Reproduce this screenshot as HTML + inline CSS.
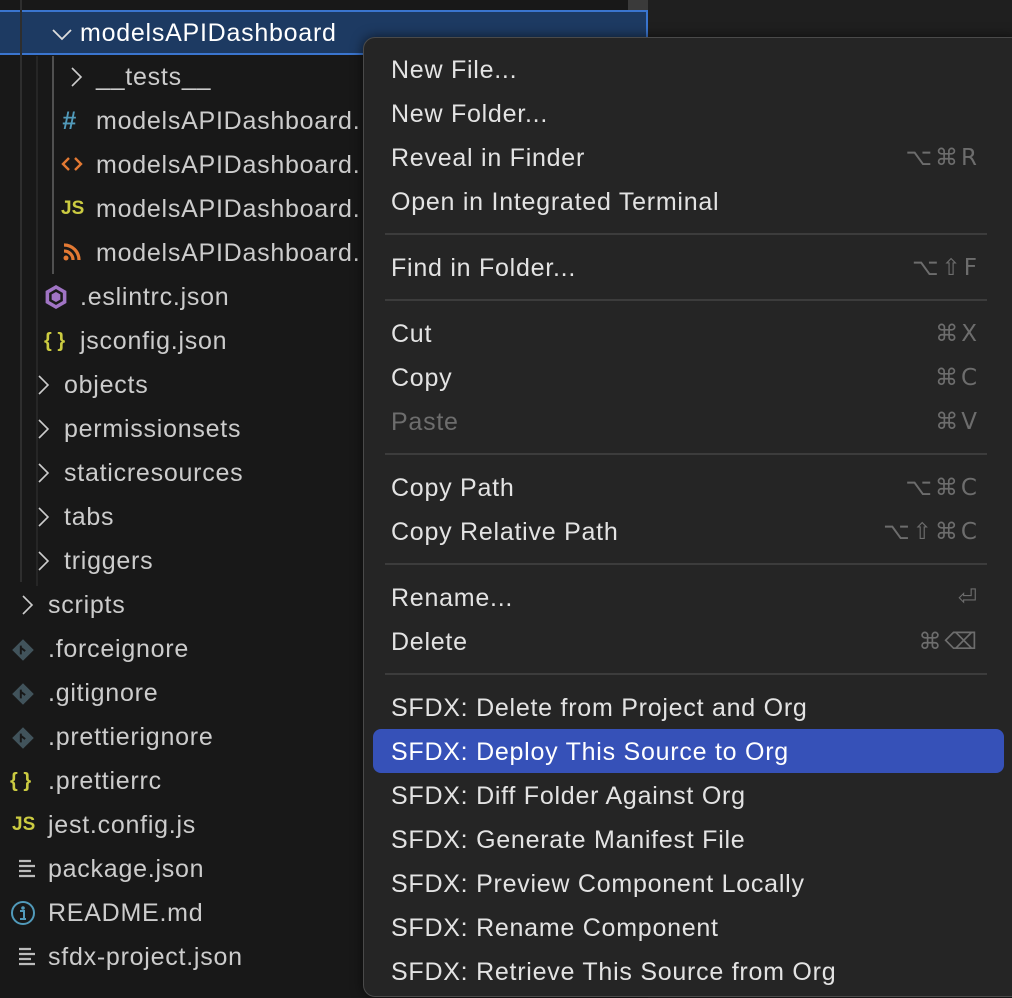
<!DOCTYPE html>
<html><head><meta charset="utf-8"><style>
*{margin:0;padding:0;box-sizing:border-box}
body{width:1012px;height:998px;background:#181818;overflow:hidden;position:relative;font-family:"Liberation Sans","DejaVu Sans",sans-serif;font-size:25px;letter-spacing:0.75px;color:#cccccc}
.r{position:absolute;height:44px;line-height:44px;white-space:nowrap}
.vl{position:absolute;width:2px}
#menu{position:absolute;left:363px;top:37px;width:660px;height:960px;background:#252525;border:1px solid #4a4a4a;border-radius:12px;box-shadow:0 0 12px rgba(0,0,0,.6)}
.m{position:absolute;left:27px;height:44px;line-height:44px;color:#e3e3e3;white-space:nowrap}
.k{position:absolute;right:42px;height:44px;line-height:44px;color:#6d6d6d;font-size:23px;white-space:nowrap;font-family:"DejaVu Sans","Liberation Sans",sans-serif;letter-spacing:3px}
.sep{position:absolute;left:21px;width:602px;height:2px;background:#3c3c3c}
</style></head><body>
<div style="position:absolute;left:648px;top:0;width:364px;height:998px;background:#1f1f1f"></div>
<div style="position:absolute;left:628px;top:0;width:20px;height:36px;background:#3a3a3a"></div>
<div style="position:absolute;left:0;top:10px;width:648px;height:45px;background:#1d3a62;border:2px solid #3a75cf;border-left:none"></div>
<div class="vl" style="left:20px;top:0;height:582px;background:#2e2e2e"></div>
<div class="vl" style="left:36px;top:56px;height:530px;background:#262626"></div>
<div class="vl" style="left:52px;top:56px;height:218px;background:#505050"></div>

<svg style="position:absolute;left:50px;top:22px" width="24" height="24" viewBox="0 0 24 24"><path d="M3 8l9 9 9-9" fill="none" stroke="#ddd" stroke-width="1.8"/></svg>
<div class="r" style="left:80px;top:11px;color:#fff">modelsAPIDashboard</div>

<svg style="position:absolute;left:64px;top:65px" width="24" height="24" viewBox="0 0 24 24"><path d="M8 3l9 9-9 9" fill="none" stroke="#ccc" stroke-width="1.6"/></svg>
<div class="r" style="left:96px;top:55px">__tests__</div>

<div class="r" style="left:62px;top:99px;color:#519aba;font-weight:bold;font-style:italic">#</div>
<div class="r" style="left:96px;top:99px">modelsAPIDashboard.</div>
<svg style="position:absolute;left:61px;top:154px" width="22" height="20" viewBox="0 0 22 20"><path d="M8 4l-6 6 6 6M14 4l6 6-6 6" fill="none" stroke="#e37933" stroke-width="2.4"/></svg>
<div class="r" style="left:96px;top:143px">modelsAPIDashboard.</div>
<div class="r" style="left:61px;top:187px;color:#cbcb41;font-weight:bold;font-size:19px;letter-spacing:0">JS</div>
<div class="r" style="left:96px;top:187px">modelsAPIDashboard.</div>
<svg style="position:absolute;left:63px;top:243px" width="18" height="18" viewBox="0 0 18 18"><circle cx="3" cy="15" r="2.5" fill="#e37933"/><path d="M1 8a9 9 0 0 1 9 9M1 2a15 15 0 0 1 15 15" fill="none" stroke="#e37933" stroke-width="3.2"/></svg>
<div class="r" style="left:96px;top:231px">modelsAPIDashboard.</div>

<svg style="position:absolute;left:43px;top:284px" width="26" height="26" viewBox="0 0 26 26"><polygon points="13,1 23.4,7 23.4,19 13,25 2.6,19 2.6,7" fill="#a074c4"/><polygon points="13,6.5 18.6,9.7 18.6,16.3 13,19.5 7.4,16.3 7.4,9.7" fill="none" stroke="#1a1a1a" stroke-width="2.5"/></svg>
<div class="r" style="left:80px;top:275px">.eslintrc.json</div>
<div class="r" style="left:44px;top:319px;color:#cbcb41;font-size:20px;font-weight:bold;letter-spacing:0">{ }</div>
<div class="r" style="left:80px;top:319px">jsconfig.json</div>

<svg style="position:absolute;left:31px;top:373px" width="24" height="24" viewBox="0 0 24 24"><path d="M8 3l9 9-9 9" fill="none" stroke="#ccc" stroke-width="1.6"/></svg>
<div class="r" style="left:64px;top:363px">objects</div>
<svg style="position:absolute;left:31px;top:417px" width="24" height="24" viewBox="0 0 24 24"><path d="M8 3l9 9-9 9" fill="none" stroke="#ccc" stroke-width="1.6"/></svg>
<div class="r" style="left:64px;top:407px">permissionsets</div>
<svg style="position:absolute;left:31px;top:461px" width="24" height="24" viewBox="0 0 24 24"><path d="M8 3l9 9-9 9" fill="none" stroke="#ccc" stroke-width="1.6"/></svg>
<div class="r" style="left:64px;top:451px">staticresources</div>
<svg style="position:absolute;left:31px;top:505px" width="24" height="24" viewBox="0 0 24 24"><path d="M8 3l9 9-9 9" fill="none" stroke="#ccc" stroke-width="1.6"/></svg>
<div class="r" style="left:64px;top:495px">tabs</div>
<svg style="position:absolute;left:31px;top:549px" width="24" height="24" viewBox="0 0 24 24"><path d="M8 3l9 9-9 9" fill="none" stroke="#ccc" stroke-width="1.6"/></svg>
<div class="r" style="left:64px;top:539px">triggers</div>

<svg style="position:absolute;left:15px;top:593px" width="24" height="24" viewBox="0 0 24 24"><path d="M8 3l9 9-9 9" fill="none" stroke="#ccc" stroke-width="1.6"/></svg>
<div class="r" style="left:48px;top:583px">scripts</div>

<svg style="position:absolute;left:11px;top:638px" width="24" height="24" viewBox="0 0 22 22"><rect x="4" y="4" width="14" height="14" transform="rotate(45 11 11)" fill="#41535b"/><path d="M9 7v8M9 9l4 3" stroke="#181818" stroke-width="1.8" fill="none"/></svg>
<div class="r" style="left:48px;top:627px">.forceignore</div>
<svg style="position:absolute;left:11px;top:682px" width="24" height="24" viewBox="0 0 22 22"><rect x="4" y="4" width="14" height="14" transform="rotate(45 11 11)" fill="#41535b"/><path d="M9 7v8M9 9l4 3" stroke="#181818" stroke-width="1.8" fill="none"/></svg>
<div class="r" style="left:48px;top:671px">.gitignore</div>
<svg style="position:absolute;left:11px;top:726px" width="24" height="24" viewBox="0 0 22 22"><rect x="4" y="4" width="14" height="14" transform="rotate(45 11 11)" fill="#41535b"/><path d="M9 7v8M9 9l4 3" stroke="#181818" stroke-width="1.8" fill="none"/></svg>
<div class="r" style="left:48px;top:715px">.prettierignore</div>
<div class="r" style="left:10px;top:759px;color:#cbcb41;font-size:20px;font-weight:bold;letter-spacing:0">{ }</div>
<div class="r" style="left:48px;top:759px">.prettierrc</div>
<div class="r" style="left:12px;top:803px;color:#cbcb41;font-weight:bold;font-size:19px;letter-spacing:0">JS</div>
<div class="r" style="left:48px;top:803px">jest.config.js</div>
<svg style="position:absolute;left:17px;top:858px" width="20" height="20" viewBox="0 0 20 20"><path d="M2 3h12M2 8h16M2 13h12M2 18h16" stroke="#bbb" stroke-width="2.2"/></svg>
<div class="r" style="left:48px;top:847px">package.json</div>
<svg style="position:absolute;left:10px;top:900px" width="26" height="26" viewBox="0 0 26 26"><circle cx="13" cy="13" r="11" fill="none" stroke="#519aba" stroke-width="2"/><circle cx="13" cy="8" r="1.8" fill="#519aba"/><path d="M10 11h4v8M10 19h6" stroke="#519aba" stroke-width="2" fill="none"/></svg>
<div class="r" style="left:48px;top:891px">README.md</div>
<svg style="position:absolute;left:17px;top:946px" width="20" height="20" viewBox="0 0 20 20"><path d="M2 3h12M2 8h16M2 13h12M2 18h16" stroke="#bbb" stroke-width="2.2"/></svg>
<div class="r" style="left:48px;top:935px">sfdx-project.json</div>

<div id="menu">
<div class="m" style="top:10px">New File...</div>
<div class="m" style="top:54px">New Folder...</div>
<div class="m" style="top:98px">Reveal in Finder</div><div class="k" style="top:98px">⌥⌘R</div>
<div class="m" style="top:142px">Open in Integrated Terminal</div>
<div class="sep" style="top:195px"></div>
<div class="m" style="top:208px">Find in Folder...</div><div class="k" style="top:208px">⌥⇧F</div>
<div class="sep" style="top:261px"></div>
<div class="m" style="top:274px">Cut</div><div class="k" style="top:274px">⌘X</div>
<div class="m" style="top:318px">Copy</div><div class="k" style="top:318px">⌘C</div>
<div class="m" style="top:362px;color:#6d6d6d">Paste</div><div class="k" style="top:362px">⌘V</div>
<div class="sep" style="top:415px"></div>
<div class="m" style="top:428px">Copy Path</div><div class="k" style="top:428px">⌥⌘C</div>
<div class="m" style="top:472px">Copy Relative Path</div><div class="k" style="top:472px">⌥⇧⌘C</div>
<div class="sep" style="top:525px"></div>
<div class="m" style="top:538px">Rename...</div><div class="k" style="top:538px">⏎</div>
<div class="m" style="top:582px">Delete</div><div class="k" style="top:582px">⌘⌫</div>
<div class="sep" style="top:635px"></div>
<div class="m" style="top:648px">SFDX: Delete from Project and Org</div>
<div style="position:absolute;left:9px;top:691px;width:631px;height:44px;background:#3651b8;border-radius:8px"></div>
<div class="m" style="top:692px;color:#fff">SFDX: Deploy This Source to Org</div>
<div class="m" style="top:736px">SFDX: Diff Folder Against Org</div>
<div class="m" style="top:780px">SFDX: Generate Manifest File</div>
<div class="m" style="top:824px">SFDX: Preview Component Locally</div>
<div class="m" style="top:868px">SFDX: Rename Component</div>
<div class="m" style="top:912px">SFDX: Retrieve This Source from Org</div>
</div>
</body></html>
